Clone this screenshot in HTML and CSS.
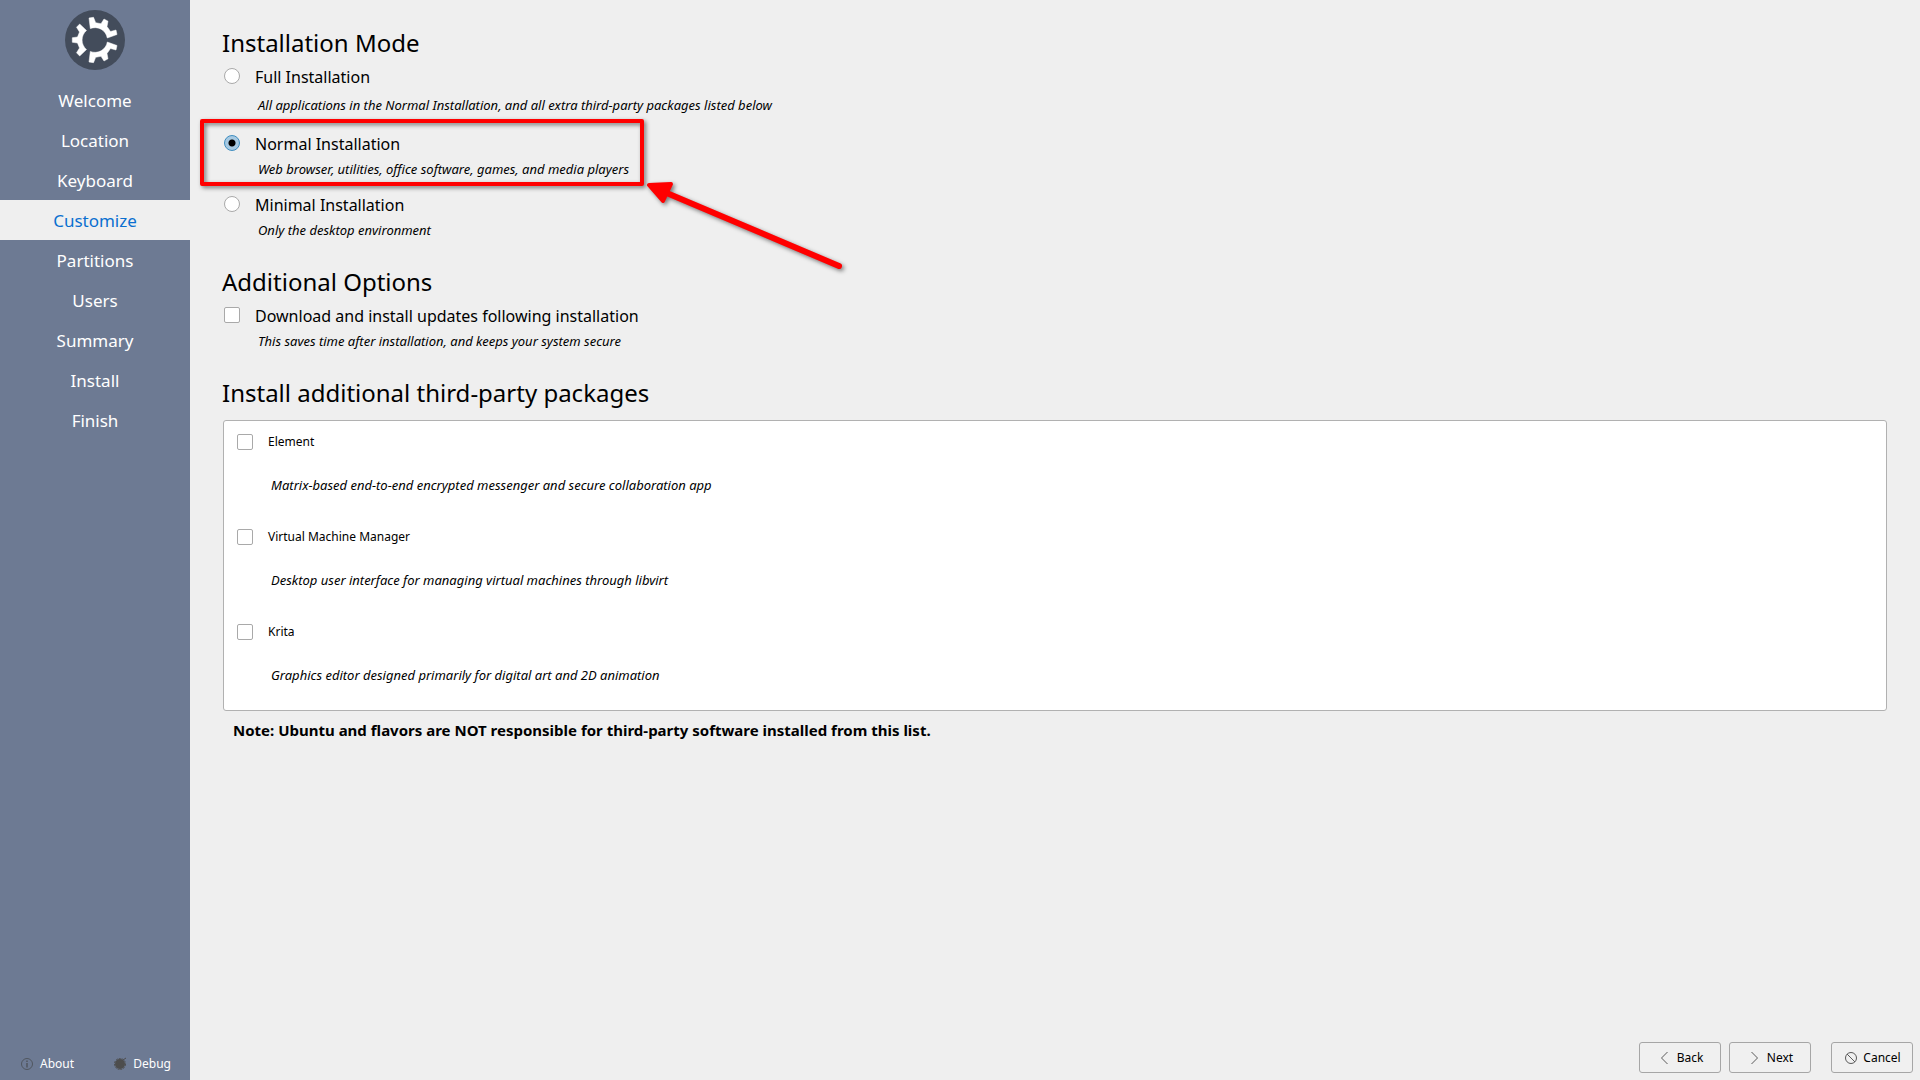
FILE: index.html
```html
<!DOCTYPE html>
<html lang="en">
<head>
  <meta charset="UTF-8">
  <title>Installer | Customize</title>
  <meta name="viewport" content="width=device-width, initial-scale=1.0">
  <link rel="stylesheet" href="styles.css">
</head>

<body>

<aside class="sidebar">
  <svg class="logo" viewBox="0 0 60 60" aria-label="Kubuntu">
    <circle cx="30" cy="30" r="30" fill="#434c5b"/>
    <g fill="#fff" stroke="#fff" stroke-width="0.500" stroke-linejoin="round">
      <path d="M24 8 L28.500 7.300 L30.700 12.700 L36 13.700 L39 9 L43 11.200 L42 16.500 L45.500 21.500 L51 20 L52 24.500 L42.300 28 A12.400 12.400 0 0 0 25.300 18.600 Z"/>
      <path d="M24 52 L28.500 52.700 L30.700 47.300 L36 46.300 L39 51 L43 48.800 L42 43.500 L45.500 38.500 L51 40 L52 35.500 L42.300 32 A12.400 12.400 0 0 1 25.300 41.400 Z"/>
      <path d="M14.700 14 L11.500 17.200 L14.500 22 L12.500 27 L7.300 27.700 L7.300 32.300 L12.500 33 L14.500 38 L11.500 42.800 L14.700 46 L21.500 39.500 A12.400 12.400 0 0 1 21.500 20.500 Z"/>
    </g>
  </svg>

  <nav class="steps">
    <a href="#welcome">Welcome</a>
    <a href="#location">Location</a>
    <a href="#keyboard">Keyboard</a>
    <a href="#customize" class="current">Customize</a>
    <a href="#partitions">Partitions</a>
    <a href="#users">Users</a>
    <a href="#summary">Summary</a>
    <a href="#install">Install</a>
    <a href="#finish">Finish</a>
  </nav>

  <div class="sidebar-footer">
    <button type="button">
      <svg class="icon" viewBox="0 0 16 16" fill="none" stroke="#50565f">
        <circle cx="8" cy="8" r="5.500"/>
        <path d="M8 7 V11.500 M8 4.500 V6" stroke-width="1.500"/>
      </svg>
      About
    </button>
    <button type="button">
      <svg class="icon" viewBox="0 0 16 16" fill="#4d4d4d">
        <circle cx="8" cy="8" r="5"/>
        <circle cx="8" cy="8" r="5.500" fill="none" stroke="#4d4d4d" stroke-dasharray="2 1"/>
        <path d="M11 4 L14 2" stroke="#4d4d4d"/>
      </svg>
      Debug
    </button>
  </div>
</aside>

<main>
  <section>
    <h1>Installation Mode</h1>

    <div class="option spaced">
      <label><input type="radio" name="mode">Full Installation</label>
      <p>All applications in the Normal Installation, and all extra third-party packages listed below</p>
    </div>

    <div class="option marked">
      <label><input type="radio" name="mode" checked>Normal Installation</label>
      <p>Web browser, utilities, office software, games, and media players</p>
      <div class="highlight"></div>
      <svg class="arrow" viewBox="0 0 206 96">
        <path d="M16 9 L193 84" stroke="#f00" stroke-width="6" stroke-linecap="round"/>
        <path d="M3 3 L25 2 L17 19 Z" fill="#f00" stroke="#f00" stroke-width="4" stroke-linejoin="round"/>
      </svg>
    </div>

    <div class="option">
      <label><input type="radio" name="mode">Minimal Installation</label>
      <p>Only the desktop environment</p>
    </div>
  </section>

  <section>
    <h1>Additional Options</h1>

    <div class="option">
      <label><input type="checkbox">Download and install updates following installation</label>
      <p>This saves time after installation, and keeps your system secure</p>
    </div>
  </section>

  <section>
    <h1>Install additional third-party packages</h1>

    <div class="packages">
      <div class="package">
        <label><input type="checkbox">Element</label>
        <p>Matrix-based end-to-end encrypted messenger and secure collaboration app</p>
      </div>
      <div class="package">
        <label><input type="checkbox">Virtual Machine Manager</label>
        <p>Desktop user interface for managing virtual machines through libvirt</p>
      </div>
      <div class="package">
        <label><input type="checkbox">Krita</label>
        <p>Graphics editor designed primarily for digital art and 2D animation</p>
      </div>
    </div>

    <p class="note">Note: Ubuntu and flavors are NOT responsible for third-party software installed from this list.</p>
  </section>

  <footer class="actions">
    <button type="button">
      <svg class="icon" viewBox="0 0 16 16" fill="none" stroke="#5a5a5a"><path d="M10.500 2 L4.500 8 L10.500 14"/></svg>
      Back
    </button>
    <button type="button">
      <svg class="icon" viewBox="0 0 16 16" fill="none" stroke="#5a5a5a"><path d="M4.500 2 L10.500 8 L4.500 14"/></svg>
      Next
    </button>
    <button type="button" class="cancel">
      <svg class="icon" viewBox="0 0 16 16" fill="none" stroke="#5a5a5a"><circle cx="8" cy="8" r="5.500"/><path d="M4 4 L12 12"/></svg>
      Cancel
    </button>
  </footer>
</main>

</body>
</html>
```

FILE: styles.css
```css
* {
  box-sizing: border-box;
}
body {
  font-family: 'Noto Sans', sans-serif;
  margin: 0;
  min-height: 100vh;
  display: flex;
  background: #efefef;
  color: #000;
}
h1, p {
  margin: 0;
}
button {
  font-family: inherit;
  font-size: 12px;
  line-height: 16px;
  display: flex;
  align-items: center;
  justify-content: center;
  gap: 4px;
  cursor: pointer;
}
.icon {
  width: 16px;
  height: 16px;
}

/* sidebar */
.sidebar {
  width: 190px;
  flex-shrink: 0;
  display: flex;
  flex-direction: column;
  background: #6d7a93;
}
.logo {
  width: 60px;
  height: 60px;
  margin: 10px auto;
}
.steps a {
  display: block;
  padding-top: 2px;
  line-height: 38px;
  text-align: center;
  text-decoration: none;
  font-size: 17px;
  color: #fff;
}
.steps a.current {
  background: #efefef;
  color: #0a6fd0;
}
.sidebar-footer {
  margin-top: auto;
  padding: 0 19px 8px;
  display: flex;
  justify-content: space-between;
}
.sidebar-footer button {
  gap: 5px;
  padding: 0;
  border: none;
  background: none;
  color: #fff;
}

/* content */
main {
  flex: 1;
  padding: 26px 33px 0 32px;
  display: flex;
  flex-direction: column;
}
section {
  margin-bottom: 26px;
}
h1 {
  font-size: 24px;
  line-height: 33px;
  font-weight: normal;
  margin-bottom: 7px;
}
label {
  display: flex;
  align-items: center;
  gap: 15px;
  line-height: 22px;
}
input {
  appearance: none;
  width: 16px;
  height: 16px;
  margin: 0;
  flex-shrink: 0;
  background: #fff;
  border: 1px solid #a9a9a9;
  border-radius: 2px;
}
input[type="radio"] {
  border-radius: 50%;
}
input[type="radio"]:checked {
  border-color: #3e8dc0;
  background: radial-gradient(circle, #000 3px, #a6c9e2 4px);
}
.option {
  display: flex;
  flex-direction: column;
  gap: 5px;
  padding-left: 2px;
}
.option + .option {
  margin-top: 16px;
}
.option label {
  align-items: flex-start;
  font-size: 16px;
}
.option input {
  margin-top: 2px;
}
.option p, .package p {
  font-size: 13px;
  line-height: 18px;
  font-style: italic;
  padding-left: 34px;
}
.option.spaced {
  gap: 8px;
  padding-bottom: 3px;
}
.packages {
  margin: 11px 0 0 1px;
  padding: 2px 13px;
  background: #fff;
  border: 1px solid #b1b1b1;
  border-radius: 3px;
}
.package {
  height: 95px;
  padding-top: 8px;
}
.package label {
  font-size: 12px;
  margin-bottom: 23px;
}
.note {
  margin-top: 9px;
  padding-left: 11px;
  font-size: 15px;
  line-height: 20px;
  font-weight: bold;
}

/* callout drawn over the selected option */
.marked {
  position: relative;
}
.highlight {
  position: absolute;
  top: -14px;
  left: -22px;
  width: 444px;
  height: 67px;
  border: 4px solid #f00;
  border-radius: 2px;
  filter: drop-shadow(2px 2px 2px rgba(0,0,0,0.5));
  pointer-events: none;
}
.arrow {
  position: absolute;
  top: 49px;
  left: 424px;
  width: 206px;
  height: 96px;
  overflow: visible;
  filter: drop-shadow(2px 2px 2px rgba(0,0,0,0.5));
  pointer-events: none;
}

/* navigation buttons */
.actions {
  margin: auto -26px 7px 0;
  display: flex;
  justify-content: flex-end;
  gap: 8px;
}
.actions button {
  min-width: 82px;
  height: 31px;
  padding: 0 10px;
  border: 1px solid #a6a6a6;
  border-radius: 3px;
  background: #f0f0f0;
  color: #000;
}
.actions .cancel {
  margin-left: 12px;
}
```
